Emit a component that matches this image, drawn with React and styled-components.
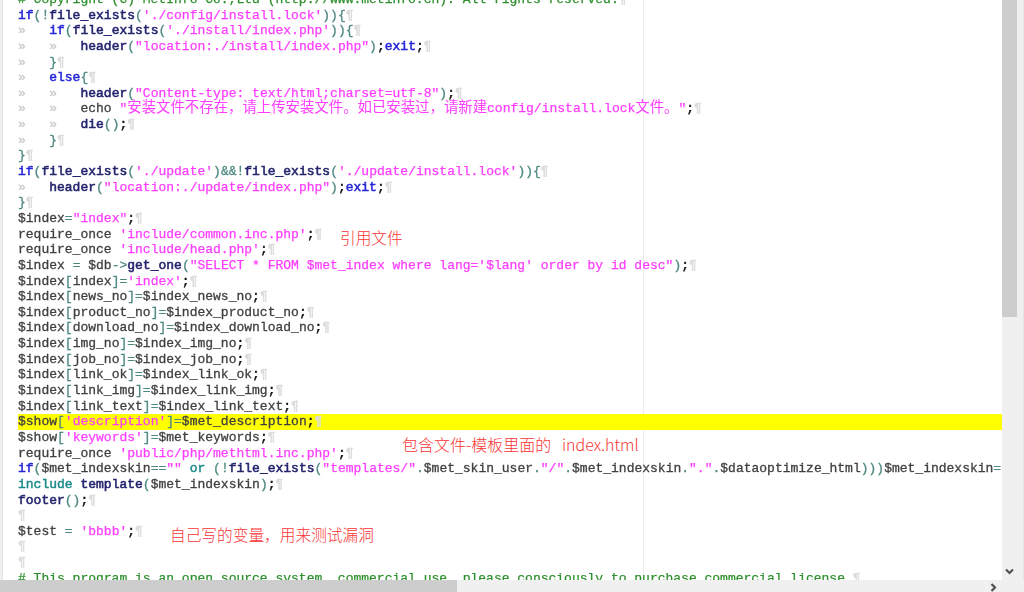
import React from 'react';
import styled, { createGlobalStyle } from 'styled-components';

const Global = createGlobalStyle`
  html, body { margin: 0; padding: 0; background: #fff; }
  #root { width: 1024px; height: 592px; overflow: hidden; }
`;

const Window = styled.div`
  position: relative;
  width: 1024px;
  height: 592px;
  display: grid;
  grid-template-columns: 1002px 22px;
  grid-template-rows: 580px 12px;
  background: #f0f0f0;
  overflow: hidden;
`;

const Editor = styled.div`
  position: relative;
  background: #fff;
  overflow: hidden;
  display: flex;
  border-left: 1px solid #e4e4e4;
  margin-left: 2px;
`;

const Code = styled.div`
  margin: -8px 0 0 15px;
  font-family: "Liberation Mono", monospace;
  font-size: 13px;
  line-height: 15.65px;
  filter: blur(0.5px);
  white-space: pre;
`;

const Line = styled.div`
  height: 15.65px;
  width: 985px;
  background: ${p => (p.$marked ? '#ffff00' : 'transparent')};
`;

const COLORS = {
  kw: '#2424d8',
  fn: '#24246e',
  str: '#ff3cff',
  com: '#2e8f2e',
  id: '#404040',
  punct: '#4f8a80',
  semi: '#111111',
  tab: '#c4c4c4',
  pil: '#dcdcdc',
  inc: '#1a8a8a',
};

const STROKE = { kw: 0.5, fn: 0.55, inc: 0.45, id: 0.3, str: 0.25, com: 0.25, punct: 0.3, semi: 0.4, tab: 0.2, pil: 0.5 };

const Token = styled.span`
  color: ${p => COLORS[p.$kind]};
  -webkit-text-stroke: ${p => STROKE[p.$kind]}px ${p => COLORS[p.$kind]};
`;

const Wide = styled.span`
  font-family: "Noto Sans CJK SC", sans-serif;
  font-size: 14.4px;
  line-height: 0;
  -webkit-text-stroke: 0;
  color: ${COLORS.str};
`;

const Guide = styled.div`
  position: absolute;
  top: 0;
  bottom: 0;
  left: 640px;
  width: 1px;
  background: #ececec;
`;

const Note = styled.span`
  position: absolute;
  left: ${p => p.$x}px;
  top: ${p => p.$y}px;
  font-family: "Noto Sans CJK SC", sans-serif;
  font-weight: 300;
  font-size: ${p => p.$size || 15.7}px;
  line-height: 20px;
  color: #fa3434;
  white-space: pre;
`;

const VScroll = styled.div`
  display: flex;
  flex-direction: column;
  align-items: flex-start;
  justify-content: space-between;
  background: #f0f0f0;
  border-right: 1px solid #e6e6e6;
  padding-right: 1px;
  box-sizing: border-box;
`;

const VThumb = styled.div`
  width: 15px;
  height: 317px;
  background: #cdcdcd;
`;

const HScroll = styled.div`
  grid-column: 1 / 3;
  display: flex;
  justify-content: space-between;
  background: #f0f0f0;
  padding-right: 26px;
`;

const HThumb = styled.div`
  width: 457px;
  height: 12px;
  background: #cdcdcd;
`;

const Arrow = styled.svg`
  width: 9px;
  height: 9px;
  fill: none;
  stroke: #505050;
  stroke-width: 2.2;
  flex: none;
`;

const RightArrow = styled(Arrow)`
  margin-top: 3px;
`;

const DownArrow = styled(Arrow)`
  margin: 0 0 4px 3px;
`;

const source = [
  "# Copyright (C) MetInfo Co.,Ltd (http://www.metinfo.cn). All rights reserved.",
  "if(!file_exists('./config/install.lock')){",
  "\tif(file_exists('./install/index.php')){",
  "\t\theader(\"location:./install/index.php\");exit;",
  "\t}",
  "\telse{",
  "\t\theader(\"Content-type: text/html;charset=utf-8\");",
  "\t\techo \"安装文件不存在，请上传安装文件。如已安装过，请新建config/install.lock文件。\";",
  "\t\tdie();",
  "\t}",
  "}",
  "if(file_exists('./update')&&!file_exists('./update/install.lock')){",
  "\theader(\"location:./update/index.php\");exit;",
  "}",
  "$index=\"index\";",
  "require_once 'include/common.inc.php';",
  "require_once 'include/head.php';",
  "$index = $db->get_one(\"SELECT * FROM $met_index where lang='$lang' order by id desc\");",
  "$index[index]='index';",
  "$index[news_no]=$index_news_no;",
  "$index[product_no]=$index_product_no;",
  "$index[download_no]=$index_download_no;",
  "$index[img_no]=$index_img_no;",
  "$index[job_no]=$index_job_no;",
  "$index[link_ok]=$index_link_ok;",
  "$index[link_img]=$index_link_img;",
  "$index[link_text]=$index_link_text;",
  "$show['description']=$met_description;",
  "$show['keywords']=$met_keywords;",
  "require_once 'public/php/methtml.inc.php';",
  "if($met_indexskin==\"\" or (!file_exists(\"templates/\".$met_skin_user.\"/\".$met_indexskin.\".\".$dataoptimize_html)))$met_indexskin=",
  "include template($met_indexskin);",
  "footer();",
  "",
  "$test = 'bbbb';",
  "",
  "",
  "# This program is an open source system, commercial use, please consciously to purchase commercial license.",
];

const TOKEN = /("[^"]*"|'[^']*')|\b(if|else|exit)\b|\b(or|include)\b|([a-z_]+)(?=\()|(\$?[A-Za-z_][A-Za-z_0-9]*)|(;)|([^\s\w$"';]+)|(\s+)/g;

function splitWide(text) {
  return text.split(/([\u3000-\u9fff\uff00-\uffef]+)/).map((part, i) =>
    i % 2 ? <Wide key={i}>{part}</Wide> : part
  );
}

function renderLine(text) {
  if (text.startsWith('#')) {
    return <Token $kind="com">{text}</Token>;
  }
  const out = [];
  let rest = text;
  let n = 0;
  while (rest.startsWith('\t')) {
    out.push(<Token key={`t${n++}`} $kind="tab">{'»   '}</Token>);
    rest = rest.slice(1);
  }
  for (const m of rest.matchAll(TOKEN)) {
    const key = n++;
    if (m[1]) out.push(<Token key={key} $kind="str">{splitWide(m[1])}</Token>);
    else if (m[2]) out.push(<Token key={key} $kind="kw">{m[2]}</Token>);
    else if (m[3]) out.push(<Token key={key} $kind="inc">{m[3]}</Token>);
    else if (m[4]) out.push(<Token key={key} $kind="fn">{m[4]}</Token>);
    else if (m[5]) out.push(<Token key={key} $kind={m[5] === 'template' ? 'fn' : 'id'}>{m[5]}</Token>);
    else if (m[6]) out.push(<Token key={key} $kind="semi">{m[6]}</Token>);
    else if (m[7]) out.push(<Token key={key} $kind="punct">{m[7]}</Token>);
    else out.push(<Token key={key} $kind="id">{m[8]}</Token>);
  }
  return out;
}

export default function App() {
  return (
    <Window>
      <Global />
      <Editor>
        <Guide />
        <Code>
          {source.map((text, i) => (
            <Line key={i} $marked={i === 27}>
              {renderLine(text)}
              {i !== 30 && <Token $kind="pil">¶</Token>}
            </Line>
          ))}
        </Code>
        <Note $x={337} $y={228}>引用文件</Note>
        <Note $x={399} $y={434} $size={16}>包含文件-模板里面的   index.html</Note>
        <Note $x={167} $y={525}>自己写的变量，用来测试漏洞</Note>
      </Editor>
      <VScroll>
        <VThumb />
        <DownArrow viewBox="0 0 9 9"><path d="M1 2.5 4.5 6 8 2.5" /></DownArrow>
      </VScroll>
      <HScroll>
        <HThumb />
        <RightArrow viewBox="0 0 9 9"><path d="M2.5 1 6 4.5 2.5 8" /></RightArrow>
      </HScroll>
    </Window>
  );
}
